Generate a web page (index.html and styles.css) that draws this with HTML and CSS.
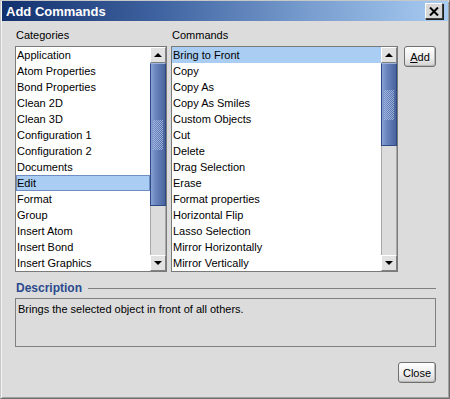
FILE: index.html
```html
<!DOCTYPE html>
<html lang="en">
<head>
    <meta charset="UTF-8">
    <title>Add Commands</title>
    <link rel="stylesheet" href="styles.css">
</head>
<body>
    <div class="window">
        <div class="titlebar">
            <span class="title">Add Commands</span>
            <button class="close-x">
                <svg width="10" height="9" viewBox="0 0 10 9"><path d="M1 0.5 L9 8.5 M9 0.5 L1 8.5" stroke="#000" stroke-width="2"/></svg>
            </button>
        </div>
        <div class="panel">
            <div class="lists">
                <div class="column cat-col">
                    <div class="label">Categories</div>
                    <div class="listbox">
                        <ul class="items">
                            <li>Application</li>
                            <li>Atom Properties</li>
                            <li>Bond Properties</li>
                            <li>Clean 2D</li>
                            <li>Clean 3D</li>
                            <li>Configuration 1</li>
                            <li>Configuration 2</li>
                            <li>Documents</li>
                            <li class="selected focused">Edit</li>
                            <li>Format</li>
                            <li>Group</li>
                            <li>Insert Atom</li>
                            <li>Insert Bond</li>
                            <li>Insert Graphics</li>
                        </ul>
                        <div class="scrollbar">
                            <div class="arrow up"></div>
                            <div class="track">
                                <div class="thumb cat-thumb"><div class="grip"></div></div>
                            </div>
                            <div class="arrow down"></div>
                        </div>
                    </div>
                </div>
                <div class="column cmd-col">
                    <div class="label">Commands</div>
                    <div class="listbox">
                        <ul class="items">
                            <li class="selected">Bring to Front</li>
                            <li>Copy</li>
                            <li>Copy As</li>
                            <li>Copy As Smiles</li>
                            <li>Custom Objects</li>
                            <li>Cut</li>
                            <li>Delete</li>
                            <li>Drag Selection</li>
                            <li>Erase</li>
                            <li>Format properties</li>
                            <li>Horizontal Flip</li>
                            <li>Lasso Selection</li>
                            <li>Mirror Horizontally</li>
                            <li>Mirror Vertically</li>
                        </ul>
                        <div class="scrollbar">
                            <div class="arrow up"></div>
                            <div class="track">
                                <div class="thumb cmd-thumb"><div class="grip"></div></div>
                            </div>
                            <div class="arrow down"></div>
                        </div>
                    </div>
                </div>
                <button class="btn add-btn"><u>A</u>dd</button>
            </div>

            <div class="desc-head">
                <span class="desc-title">Description</span>
                <span class="desc-line"></span>
            </div>
            <div class="desc-box">Brings the selected object in front of all others.</div>

            <div class="footer">
                <button class="btn close-btn">Close</button>
            </div>
        </div>
    </div>
</body>
</html>
```

FILE: styles.css
```css
body {
    margin: 0;
    padding: 0;
    font-family: "Liberation Sans", Arial, sans-serif;
    font-size: 11px;
    color: #000;
    background-color: #dcdcdc;
}

.window {
    width: 450px;
    height: 399px;
    box-sizing: border-box;
    background-color: #dcdcdc;
    border: 1px solid #c8c8c8;
    border-right-color: #6e6e6e;
    border-bottom-color: #6e6e6e;
    box-shadow: inset 1px 1px 0 #f4f4f4, inset -1px -1px 0 #a0a0a0;
    display: flex;
    flex-direction: column;
}

.titlebar {
    height: 20px;
    margin: 0 1px;
    padding: 0 4px 0 4px;
    background: linear-gradient(to right, #12306e 0%, #3f63a0 35%, #7a9fd0 70%, #a8ccf2 100%);
    display: flex;
    align-items: center;
    justify-content: space-between;
}

.title {
    color: #fff;
    font-weight: bold;
    font-size: 13px;
}

.close-x {
    width: 18px;
    height: 16px;
    padding: 0;
    margin-right: 1px;
    background-color: #d8d8d8;
    border: 1px solid #404040;
    border-top-color: #fff;
    border-left-color: #fff;
    box-shadow: 1px 1px 0 #202020;
    display: flex;
    align-items: center;
    justify-content: center;
}

.panel {
    flex: 1;
    padding: 6px 13px 0 14px;
    display: flex;
    flex-direction: column;
}

.lists {
    display: flex;
    align-items: flex-start;
}

.column {
    display: flex;
    flex-direction: column;
}

.cat-col {
    width: 152px;
    margin-right: 4px;
}

.cmd-col {
    width: 227px;
    margin-right: 6px;
}

.label {
    height: 16px;
    line-height: 16px;
    margin: 0 0 3px 1px;
}

.listbox {
    height: 226px;
    box-sizing: border-box;
    border: 1px solid #7a7a7a;
    background-color: #fff;
    display: flex;
}

.items {
    flex: 1;
    list-style: none;
    margin: 0;
    padding: 0;
    overflow: hidden;
}

.items li {
    height: 16px;
    line-height: 16px;
    padding-left: 1px;
    white-space: nowrap;
    box-sizing: border-box;
}

.items li.selected {
    background-color: #a9cdf3;
}

.items li.focused {
    border: 1px solid #6f8fc4;
    padding-left: 0;
    line-height: 14px;
}

.scrollbar {
    width: 16px;
    display: flex;
    flex-direction: column;
    background-color: #dcdcdc;
}

.arrow {
    height: 16px;
    box-sizing: border-box;
    border: 1px solid #808080;
    border-top-color: #fff;
    border-left-color: #fff;
    background-color: #e2e2e2;
    display: flex;
    align-items: center;
    justify-content: center;
}

.arrow.up::after {
    content: "";
    border-left: 4px solid transparent;
    border-right: 4px solid transparent;
    border-bottom: 4px solid #000;
}

.arrow.down::after {
    content: "";
    border-left: 4px solid transparent;
    border-right: 4px solid transparent;
    border-top: 4px solid #000;
}

.track {
    flex: 1;
    border-left: 1px solid #a8a8a8;
    border-right: 1px solid #a8a8a8;
    background-color: #dcdcdc;
}

.thumb {
    box-sizing: border-box;
    margin: 0 -1px;
    border: 1px solid #2e4a86;
    border-top-color: #9fb4de;
    background: linear-gradient(to right, #8aa2d2 0%, #6d88c0 30%, #5873ad 70%, #4a639a 100%);
    display: flex;
    align-items: center;
    justify-content: center;
}

.cat-thumb {
    height: 143px;
}

.cmd-thumb {
    height: 83px;
}

.grip {
    width: 10px;
    height: 30px;
    background-image: repeating-conic-gradient(#a9bce6 0 25%, transparent 0 50%);
    background-size: 2px 2px;
    opacity: 0.8;
}

.btn {
    font-family: "Liberation Sans", Arial, sans-serif;
    font-size: 11px;
    color: #000;
    padding: 0;
    border: 1px solid #707070;
    border-radius: 3px;
    background: linear-gradient(to bottom, #ffffff 0%, #ececec 60%, #d2d2d2 100%);
    box-shadow: inset -1px -1px 0 #b8b8b8;
}

.add-btn {
    width: 32px;
    height: 21px;
    margin-top: 19px;
}

.desc-head {
    display: flex;
    align-items: center;
    margin-top: 8px;
    height: 16px;
}

.desc-title {
    color: #2b4a8c;
    font-weight: bold;
    font-size: 12px;
    margin-left: 1px;
}

.desc-line {
    flex: 1;
    height: 0;
    border-top: 1px solid #808080;
    margin-left: 6px;
}

.desc-box {
    height: 49px;
    margin-top: 2px;
    box-sizing: border-box;
    border: 1px solid #808080;
    padding: 3px 2px;
    line-height: 14px;
}

.footer {
    display: flex;
    justify-content: flex-end;
    margin-top: 15px;
}

.close-btn {
    width: 38px;
    height: 21px;
}
```
